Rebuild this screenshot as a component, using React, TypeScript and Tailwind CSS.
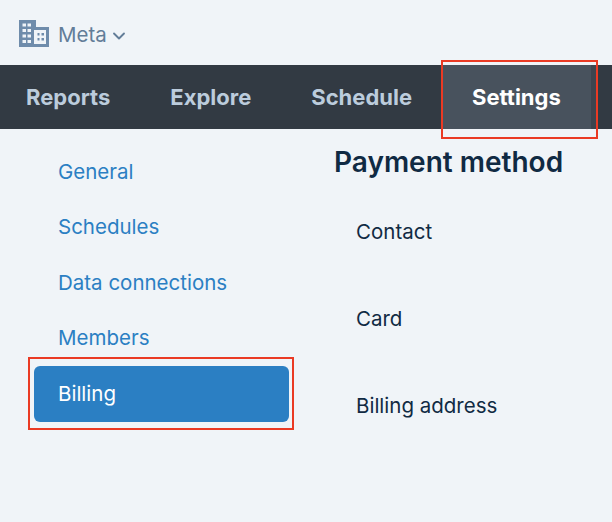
import { ChevronDown } from "lucide-react";

const tabs = ["Reports", "Explore", "Schedule", "Settings"];
const sideLinks = ["General", "Schedules", "Data connections", "Members", "Billing"];
const fields = ["Contact", "Card", "Billing address"];

const BuildingIcon = () => (
  <svg width="31" height="28" viewBox="0 0 31 28" className="-mt-1 text-[#6f8cab]">
    <path
      fill="currentColor"
      fillRule="evenodd"
      d="M0 0h17v7h13v20H0V0zm3.5 3.5v3h3.5v-3H3.500zm5 0v3h3.500v-3H8.500zm-5 5.500v3h3.500V9H3.500zm5 0v3h3.500V9H8.500zm-5 5.500v3h3.500v-3H3.500zm5 0v3h3.500v-3H8.500zm-5 5.500v3h3.500v-3H3.500zm5 0v3h3.500v-3H8.500zM15 10v14h12V10H15z"
    />
    <path fill="currentColor" d="M18.500 13h2v2.500h-2zM22.500 13h2.500v2.500h-2.500zM18.500 18h2v2.500h-2zM22.500 18h2.500v2.500h-2.500z" />
  </svg>
);

export default function App() {
  return (
    <div className="relative h-[522px] w-[612px] overflow-hidden bg-[#f0f4f8] font-['Inter',sans-serif]">
      <div className="flex h-[65px] items-center pl-[19px] pt-[6px] text-[#627d98]">
        <BuildingIcon />
        <span className="ml-2 text-[20.5px]">Meta</span>
        <ChevronDown className="ml-0.5 h-[20px] w-[20px]" strokeWidth={2.25} />
      </div>

      <nav className="flex h-[64px] bg-[#323a43]">
        {tabs.map((tab, i) => (
          <div
            key={tab}
            className={
              "flex items-center px-[30px] pt-px text-[22px] font-bold " +
              (i === 0 ? "-ml-1 " : "") +
              (tab === "Settings" ? "bg-[#48525d] text-white" : "text-[#bcccdc]")
            }
          >
            {tab}
          </div>
        ))}
        <div className="w-[7px] bg-[#3d454f]" />
      </nav>

      <div className="flex">
        <div className="ml-[34px] mt-[15px] flex w-[255px] flex-col">
          {sideLinks.map((link) => (
            <div
              key={link}
              className={
                "flex h-[55.5px] items-center rounded-md px-6 text-[20.5px] leading-6 " +
                (link === "Billing" ? "bg-[#2b7fc3] text-white" : "text-[#2b7fc3]")
              }
            >
              {link}
            </div>
          ))}
        </div>

        <div className="ml-[45px] mt-[15px]">
          <h2 className="text-[28px] font-semibold leading-9 text-[#102a43]">Payment method</h2>
          <div className="mt-[40px] flex flex-col gap-[63px] pl-[22px]">
            {fields.map((field) => (
              <div key={field} className="text-[20.5px] leading-6 text-[#102a43]">
                {field}
              </div>
            ))}
          </div>
        </div>
      </div>

      {/* red annotation boxes */}
      <div className="absolute left-[441px] top-[60px] h-[79px] w-[157px] border-2 border-[#ea3a24]" />
      <div className="absolute left-[28px] top-[357px] h-[73px] w-[266px] border-2 border-[#ea3a24]" />
    </div>
  );
}
